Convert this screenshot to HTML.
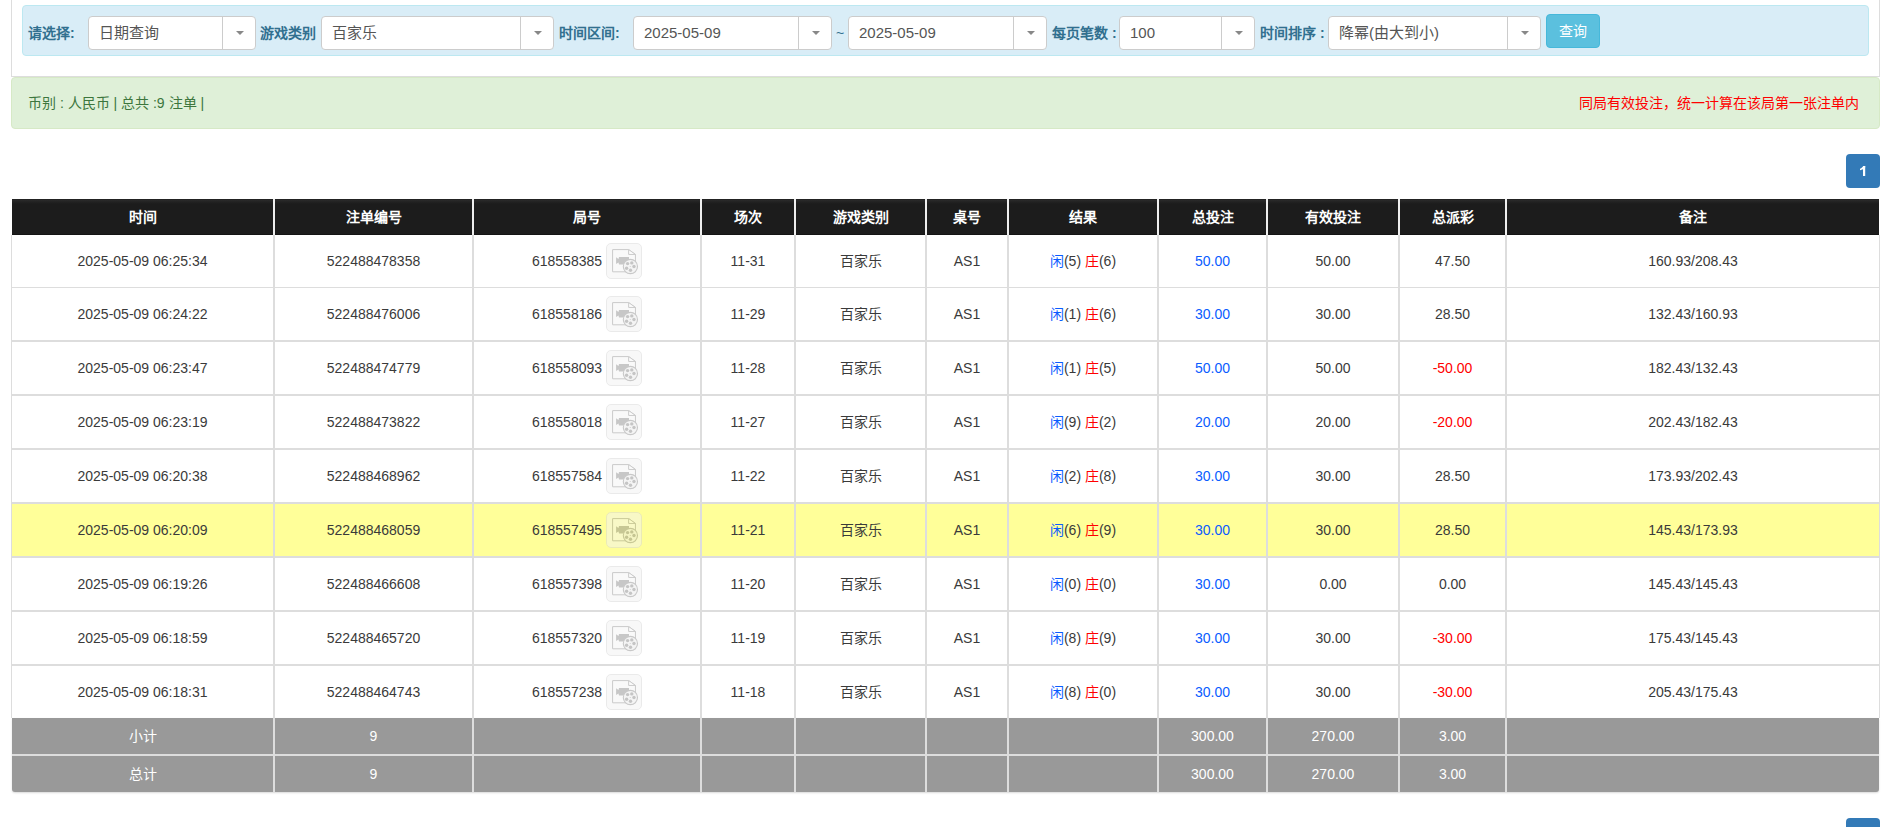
<!DOCTYPE html>
<html lang="zh-CN"><head><meta charset="utf-8"><style>
*{box-sizing:border-box;margin:0;padding:0}
html,body{width:1891px;height:827px;overflow:hidden;background:#fff;font-family:"Liberation Sans",sans-serif;color:#3a3a3a}
.abs{position:absolute}
.panel{position:absolute;left:11px;top:-20px;width:1869px;height:97px;border:1px solid #ddd;border-top:none;background:#fff}
.bar{position:absolute;left:22px;top:5px;width:1847px;height:51px;background:#d9edf7;border:1px solid #bce8f1;border-radius:4px}
.lab{position:absolute;top:25px;font-size:14px;line-height:16px;font-weight:bold;color:#31708f;white-space:nowrap}
.sel{position:absolute;top:16px;height:34px;background:#fff;border:1px solid #ccc;border-radius:4px;font-size:15px;color:#555;line-height:32px;padding-left:10px;white-space:nowrap}
.sel .dv{position:absolute;top:0;bottom:0;width:1px;background:#ccc}
.sel .ct{position:absolute;top:14px;width:0;height:0;border-left:4px solid transparent;border-right:4px solid transparent;border-top:4px solid #888}
.btn{position:absolute;left:1546px;top:14px;width:54px;height:34px;background:#5bc0de;border:1px solid #46b8da;border-radius:4px;color:#fff;font-size:14px;line-height:32px;text-align:center}
.alert{position:absolute;left:11px;top:77px;width:1869px;height:52px;background:#dff0d8;border:1px solid #d6e9c6;border-radius:4px;font-size:14px}
.pg{position:absolute;left:1846px;width:34px;height:34px;background:#337ab7;border-radius:4px;color:#fff;font-size:14px;line-height:34px;text-align:center}
.c{position:absolute;display:flex;align-items:center;justify-content:center;font-size:14px;white-space:nowrap}
.hd{color:#fff;font-weight:bold}
.vl{position:absolute;width:2px}
.hl{position:absolute;height:2px}
.cj{position:relative;top:-1px}
.b{color:#0a5cff}.r{color:#f00}
.ic{display:inline-block;width:36px;height:36px;border:1px solid #d7d7d7;border-radius:5px;background:#f3f3f3;margin-left:4px;position:relative;top:0px;opacity:.5}
.ic svg{position:absolute;left:-1px;top:-1px}
</style></head><body>

<div class="panel"></div>
<div class="bar"></div>
<div class="lab" style="left:28px">请选择:</div>
<div class="lab" style="left:260px">游戏类别</div>
<div class="lab" style="left:559px">时间区间:</div>
<div class="lab" style="left:836px;font-weight:normal">~</div>
<div class="lab" style="left:1052px">每页笔数 :</div>
<div class="lab" style="left:1260px">时间排序 :</div>
<div class="sel" style="left:88px;width:168px">日期查询<div class="dv" style="left:133px"></div><div class="ct" style="left:147px"></div></div>
<div class="sel" style="left:321px;width:233px">百家乐<div class="dv" style="left:198px"></div><div class="ct" style="left:212px"></div></div>
<div class="sel" style="left:633px;width:199px">2025-05-09<div class="dv" style="left:164px"></div><div class="ct" style="left:178px"></div></div>
<div class="sel" style="left:848px;width:199px">2025-05-09<div class="dv" style="left:164px"></div><div class="ct" style="left:178px"></div></div>
<div class="sel" style="left:1119px;width:136px">100<div class="dv" style="left:101px"></div><div class="ct" style="left:115px"></div></div>
<div class="sel" style="left:1328px;width:213px">降幂(由大到小)<div class="dv" style="left:178px"></div><div class="ct" style="left:192px"></div></div>
<div class="btn">查询</div>
<div class="alert"><div class="abs" style="left:16px;top:16px;color:#3c763d;line-height:18px">币别 : 人民币 | 总共 :9 注单 |</div><div class="abs" style="right:20px;top:16px;color:#f00;line-height:18px">同局有效投注，统一计算在该局第一张注单内</div></div>
<div class="pg" style="top:154px"><svg class="abs" style="left:0;top:0" width="34" height="34" viewBox="0 0 34 34"><path d="M17 12h2.2v10h-2.2z" fill="#fff"/><path d="M17.2 12L19.2 12L19.2 13.6C18 14.9 16.2 15.9 14 16.3L14 14.7C15.6 14.2 16.7 13.2 17.2 12z" fill="#fff"/></svg></div>
<div class="pg" style="top:818px"></div>
<div class="abs" style="left:12px;top:199px;width:1867px;height:36px;background:linear-gradient(#1a1a1a 0,#2b2b2b 1px,#222 3px,#1c1c1c 5px,#1c1c1c 35px,#0d0d0d 36px)"></div>
<div class="abs" style="left:12px;top:235px;width:1867px;height:52px;background:#fff"></div>
<div class="abs" style="left:12px;top:288px;width:1867px;height:52px;background:#fff"></div>
<div class="abs" style="left:12px;top:342px;width:1867px;height:52px;background:#fff"></div>
<div class="abs" style="left:12px;top:396px;width:1867px;height:52px;background:#fff"></div>
<div class="abs" style="left:12px;top:450px;width:1867px;height:52px;background:#fff"></div>
<div class="abs" style="left:12px;top:504px;width:1867px;height:52px;background:#ffff99"></div>
<div class="abs" style="left:12px;top:558px;width:1867px;height:52px;background:#fff"></div>
<div class="abs" style="left:12px;top:612px;width:1867px;height:52px;background:#fff"></div>
<div class="abs" style="left:12px;top:666px;width:1867px;height:52px;background:#fff"></div>
<div class="abs" style="left:12px;top:718px;width:1867px;height:74px;background:#999;border-radius:0 0 3px 3px;box-shadow:0 1px 2px rgba(0,0,0,.15)"></div>
<div class="abs" style="left:11px;top:235px;width:1px;height:483px;background:#ddd"></div>
<div class="abs" style="left:1879px;top:235px;width:1px;height:483px;background:#ddd"></div>
<div class="vl" style="left:273px;top:199px;height:36px;background:#eee"></div>
<div class="vl" style="left:273px;top:235px;height:483px;background:#ddd"></div>
<div class="vl" style="left:273px;top:718px;height:74px;background:#ddd"></div>
<div class="vl" style="left:472px;top:199px;height:36px;background:#eee"></div>
<div class="vl" style="left:472px;top:235px;height:483px;background:#ddd"></div>
<div class="vl" style="left:472px;top:718px;height:74px;background:#ddd"></div>
<div class="vl" style="left:700px;top:199px;height:36px;background:#eee"></div>
<div class="vl" style="left:700px;top:235px;height:483px;background:#ddd"></div>
<div class="vl" style="left:700px;top:718px;height:74px;background:#ddd"></div>
<div class="vl" style="left:794px;top:199px;height:36px;background:#eee"></div>
<div class="vl" style="left:794px;top:235px;height:483px;background:#ddd"></div>
<div class="vl" style="left:794px;top:718px;height:74px;background:#ddd"></div>
<div class="vl" style="left:925px;top:199px;height:36px;background:#eee"></div>
<div class="vl" style="left:925px;top:235px;height:483px;background:#ddd"></div>
<div class="vl" style="left:925px;top:718px;height:74px;background:#ddd"></div>
<div class="vl" style="left:1007px;top:199px;height:36px;background:#eee"></div>
<div class="vl" style="left:1007px;top:235px;height:483px;background:#ddd"></div>
<div class="vl" style="left:1007px;top:718px;height:74px;background:#ddd"></div>
<div class="vl" style="left:1157px;top:199px;height:36px;background:#eee"></div>
<div class="vl" style="left:1157px;top:235px;height:483px;background:#ddd"></div>
<div class="vl" style="left:1157px;top:718px;height:74px;background:#ddd"></div>
<div class="vl" style="left:1266px;top:199px;height:36px;background:#eee"></div>
<div class="vl" style="left:1266px;top:235px;height:483px;background:#ddd"></div>
<div class="vl" style="left:1266px;top:718px;height:74px;background:#ddd"></div>
<div class="vl" style="left:1398px;top:199px;height:36px;background:#eee"></div>
<div class="vl" style="left:1398px;top:235px;height:483px;background:#ddd"></div>
<div class="vl" style="left:1398px;top:718px;height:74px;background:#ddd"></div>
<div class="vl" style="left:1505px;top:199px;height:36px;background:#eee"></div>
<div class="vl" style="left:1505px;top:235px;height:483px;background:#ddd"></div>
<div class="vl" style="left:1505px;top:718px;height:74px;background:#ddd"></div>
<div class="hl" style="left:12px;top:287px;width:1867px;height:1px;background:#ddd"></div>
<div class="hl" style="left:12px;top:340px;width:1867px;height:2px;background:#ddd"></div>
<div class="hl" style="left:12px;top:394px;width:1867px;height:2px;background:#ddd"></div>
<div class="hl" style="left:12px;top:448px;width:1867px;height:2px;background:#ddd"></div>
<div class="hl" style="left:12px;top:502px;width:1867px;height:2px;background:#ddd"></div>
<div class="hl" style="left:12px;top:556px;width:1867px;height:2px;background:#ddd"></div>
<div class="hl" style="left:12px;top:610px;width:1867px;height:2px;background:#ddd"></div>
<div class="hl" style="left:12px;top:664px;width:1867px;height:2px;background:#ddd"></div>
<div class="hl" style="left:12px;top:754px;width:1867px;background:#ddd"></div>
<div class="c hd" style="left:12px;top:198px;width:261px;height:36px">时间</div>
<div class="c hd" style="left:275px;top:198px;width:197px;height:36px">注单编号</div>
<div class="c hd" style="left:474px;top:198px;width:226px;height:36px">局号</div>
<div class="c hd" style="left:702px;top:198px;width:92px;height:36px">场次</div>
<div class="c hd" style="left:796px;top:198px;width:129px;height:36px">游戏类别</div>
<div class="c hd" style="left:927px;top:198px;width:80px;height:36px">桌号</div>
<div class="c hd" style="left:1009px;top:198px;width:148px;height:36px">结果</div>
<div class="c hd" style="left:1159px;top:198px;width:107px;height:36px">总投注</div>
<div class="c hd" style="left:1268px;top:198px;width:130px;height:36px">有效投注</div>
<div class="c hd" style="left:1400px;top:198px;width:105px;height:36px">总派彩</div>
<div class="c hd" style="left:1507px;top:198px;width:372px;height:36px">备注</div>
<div class="c " style="left:12px;top:235px;width:261px;height:52px">2025-05-09 06:25:34</div>
<div class="c " style="left:275px;top:235px;width:197px;height:52px">522488478358</div>
<div class="c " style="left:474px;top:235px;width:226px;height:52px">618558385<span class="ic"><svg width="36" height="36" viewBox="-0.6 0 36 36"><path d="M6 6.6h16.05l6.8 4.85v17.35h-22.85z" fill="#f5f5f5" stroke="#979797" stroke-width="1"/><path d="M22.05 6.6v4.85h6.8z" fill="#fbfbfb" stroke="#979797" stroke-width="1"/><path d="M9.5 14.2L11.9 16L12.4 14H22.4V21.6H12.4L11.9 19.5L9.5 21z" fill="#919191"/><circle cx="23.8" cy="23.5" r="7.1" fill="#ebebeb" stroke="#939393" stroke-width="1.1"/><g fill="#8d8d8d"><circle cx="21" cy="20.6" r="1.7"/><circle cx="25.2" cy="19.9" r="1.7"/><circle cx="27.4" cy="23.5" r="1.7"/><circle cx="23.9" cy="27.2" r="1.7"/><circle cx="20" cy="25.3" r="1.7"/><circle cx="23.6" cy="23.4" r="0.5"/></g></svg></span></div>
<div class="c " style="left:702px;top:235px;width:92px;height:52px">11-31</div>
<div class="c " style="left:796px;top:235px;width:129px;height:52px"><span class="cj">百家乐</span></div>
<div class="c " style="left:927px;top:235px;width:80px;height:52px">AS1</div>
<div class="c " style="left:1009px;top:235px;width:148px;height:52px"><span class="b cj">闲</span>(5)&nbsp;<span class="r cj">庄</span>(6)</div>
<div class="c " style="left:1159px;top:235px;width:107px;height:52px"><span class="b">50.00</span></div>
<div class="c " style="left:1268px;top:235px;width:130px;height:52px">50.00</div>
<div class="c " style="left:1400px;top:235px;width:105px;height:52px">47.50</div>
<div class="c " style="left:1507px;top:235px;width:372px;height:52px">160.93/208.43</div>
<div class="c " style="left:12px;top:288px;width:261px;height:52px">2025-05-09 06:24:22</div>
<div class="c " style="left:275px;top:288px;width:197px;height:52px">522488476006</div>
<div class="c " style="left:474px;top:288px;width:226px;height:52px">618558186<span class="ic"><svg width="36" height="36" viewBox="-0.6 0 36 36"><path d="M6 6.6h16.05l6.8 4.85v17.35h-22.85z" fill="#f5f5f5" stroke="#979797" stroke-width="1"/><path d="M22.05 6.6v4.85h6.8z" fill="#fbfbfb" stroke="#979797" stroke-width="1"/><path d="M9.5 14.2L11.9 16L12.4 14H22.4V21.6H12.4L11.9 19.5L9.5 21z" fill="#919191"/><circle cx="23.8" cy="23.5" r="7.1" fill="#ebebeb" stroke="#939393" stroke-width="1.1"/><g fill="#8d8d8d"><circle cx="21" cy="20.6" r="1.7"/><circle cx="25.2" cy="19.9" r="1.7"/><circle cx="27.4" cy="23.5" r="1.7"/><circle cx="23.9" cy="27.2" r="1.7"/><circle cx="20" cy="25.3" r="1.7"/><circle cx="23.6" cy="23.4" r="0.5"/></g></svg></span></div>
<div class="c " style="left:702px;top:288px;width:92px;height:52px">11-29</div>
<div class="c " style="left:796px;top:288px;width:129px;height:52px"><span class="cj">百家乐</span></div>
<div class="c " style="left:927px;top:288px;width:80px;height:52px">AS1</div>
<div class="c " style="left:1009px;top:288px;width:148px;height:52px"><span class="b cj">闲</span>(1)&nbsp;<span class="r cj">庄</span>(6)</div>
<div class="c " style="left:1159px;top:288px;width:107px;height:52px"><span class="b">30.00</span></div>
<div class="c " style="left:1268px;top:288px;width:130px;height:52px">30.00</div>
<div class="c " style="left:1400px;top:288px;width:105px;height:52px">28.50</div>
<div class="c " style="left:1507px;top:288px;width:372px;height:52px">132.43/160.93</div>
<div class="c " style="left:12px;top:342px;width:261px;height:52px">2025-05-09 06:23:47</div>
<div class="c " style="left:275px;top:342px;width:197px;height:52px">522488474779</div>
<div class="c " style="left:474px;top:342px;width:226px;height:52px">618558093<span class="ic"><svg width="36" height="36" viewBox="-0.6 0 36 36"><path d="M6 6.6h16.05l6.8 4.85v17.35h-22.85z" fill="#f5f5f5" stroke="#979797" stroke-width="1"/><path d="M22.05 6.6v4.85h6.8z" fill="#fbfbfb" stroke="#979797" stroke-width="1"/><path d="M9.5 14.2L11.9 16L12.4 14H22.4V21.6H12.4L11.9 19.5L9.5 21z" fill="#919191"/><circle cx="23.8" cy="23.5" r="7.1" fill="#ebebeb" stroke="#939393" stroke-width="1.1"/><g fill="#8d8d8d"><circle cx="21" cy="20.6" r="1.7"/><circle cx="25.2" cy="19.9" r="1.7"/><circle cx="27.4" cy="23.5" r="1.7"/><circle cx="23.9" cy="27.2" r="1.7"/><circle cx="20" cy="25.3" r="1.7"/><circle cx="23.6" cy="23.4" r="0.5"/></g></svg></span></div>
<div class="c " style="left:702px;top:342px;width:92px;height:52px">11-28</div>
<div class="c " style="left:796px;top:342px;width:129px;height:52px"><span class="cj">百家乐</span></div>
<div class="c " style="left:927px;top:342px;width:80px;height:52px">AS1</div>
<div class="c " style="left:1009px;top:342px;width:148px;height:52px"><span class="b cj">闲</span>(1)&nbsp;<span class="r cj">庄</span>(5)</div>
<div class="c " style="left:1159px;top:342px;width:107px;height:52px"><span class="b">50.00</span></div>
<div class="c " style="left:1268px;top:342px;width:130px;height:52px">50.00</div>
<div class="c " style="left:1400px;top:342px;width:105px;height:52px"><span class="r">-50.00</span></div>
<div class="c " style="left:1507px;top:342px;width:372px;height:52px">182.43/132.43</div>
<div class="c " style="left:12px;top:396px;width:261px;height:52px">2025-05-09 06:23:19</div>
<div class="c " style="left:275px;top:396px;width:197px;height:52px">522488473822</div>
<div class="c " style="left:474px;top:396px;width:226px;height:52px">618558018<span class="ic"><svg width="36" height="36" viewBox="-0.6 0 36 36"><path d="M6 6.6h16.05l6.8 4.85v17.35h-22.85z" fill="#f5f5f5" stroke="#979797" stroke-width="1"/><path d="M22.05 6.6v4.85h6.8z" fill="#fbfbfb" stroke="#979797" stroke-width="1"/><path d="M9.5 14.2L11.9 16L12.4 14H22.4V21.6H12.4L11.9 19.5L9.5 21z" fill="#919191"/><circle cx="23.8" cy="23.5" r="7.1" fill="#ebebeb" stroke="#939393" stroke-width="1.1"/><g fill="#8d8d8d"><circle cx="21" cy="20.6" r="1.7"/><circle cx="25.2" cy="19.9" r="1.7"/><circle cx="27.4" cy="23.5" r="1.7"/><circle cx="23.9" cy="27.2" r="1.7"/><circle cx="20" cy="25.3" r="1.7"/><circle cx="23.6" cy="23.4" r="0.5"/></g></svg></span></div>
<div class="c " style="left:702px;top:396px;width:92px;height:52px">11-27</div>
<div class="c " style="left:796px;top:396px;width:129px;height:52px"><span class="cj">百家乐</span></div>
<div class="c " style="left:927px;top:396px;width:80px;height:52px">AS1</div>
<div class="c " style="left:1009px;top:396px;width:148px;height:52px"><span class="b cj">闲</span>(9)&nbsp;<span class="r cj">庄</span>(2)</div>
<div class="c " style="left:1159px;top:396px;width:107px;height:52px"><span class="b">20.00</span></div>
<div class="c " style="left:1268px;top:396px;width:130px;height:52px">20.00</div>
<div class="c " style="left:1400px;top:396px;width:105px;height:52px"><span class="r">-20.00</span></div>
<div class="c " style="left:1507px;top:396px;width:372px;height:52px">202.43/182.43</div>
<div class="c " style="left:12px;top:450px;width:261px;height:52px">2025-05-09 06:20:38</div>
<div class="c " style="left:275px;top:450px;width:197px;height:52px">522488468962</div>
<div class="c " style="left:474px;top:450px;width:226px;height:52px">618557584<span class="ic"><svg width="36" height="36" viewBox="-0.6 0 36 36"><path d="M6 6.6h16.05l6.8 4.85v17.35h-22.85z" fill="#f5f5f5" stroke="#979797" stroke-width="1"/><path d="M22.05 6.6v4.85h6.8z" fill="#fbfbfb" stroke="#979797" stroke-width="1"/><path d="M9.5 14.2L11.9 16L12.4 14H22.4V21.6H12.4L11.9 19.5L9.5 21z" fill="#919191"/><circle cx="23.8" cy="23.5" r="7.1" fill="#ebebeb" stroke="#939393" stroke-width="1.1"/><g fill="#8d8d8d"><circle cx="21" cy="20.6" r="1.7"/><circle cx="25.2" cy="19.9" r="1.7"/><circle cx="27.4" cy="23.5" r="1.7"/><circle cx="23.9" cy="27.2" r="1.7"/><circle cx="20" cy="25.3" r="1.7"/><circle cx="23.6" cy="23.4" r="0.5"/></g></svg></span></div>
<div class="c " style="left:702px;top:450px;width:92px;height:52px">11-22</div>
<div class="c " style="left:796px;top:450px;width:129px;height:52px"><span class="cj">百家乐</span></div>
<div class="c " style="left:927px;top:450px;width:80px;height:52px">AS1</div>
<div class="c " style="left:1009px;top:450px;width:148px;height:52px"><span class="b cj">闲</span>(2)&nbsp;<span class="r cj">庄</span>(8)</div>
<div class="c " style="left:1159px;top:450px;width:107px;height:52px"><span class="b">30.00</span></div>
<div class="c " style="left:1268px;top:450px;width:130px;height:52px">30.00</div>
<div class="c " style="left:1400px;top:450px;width:105px;height:52px">28.50</div>
<div class="c " style="left:1507px;top:450px;width:372px;height:52px">173.93/202.43</div>
<div class="c " style="left:12px;top:504px;width:261px;height:52px">2025-05-09 06:20:09</div>
<div class="c " style="left:275px;top:504px;width:197px;height:52px">522488468059</div>
<div class="c " style="left:474px;top:504px;width:226px;height:52px">618557495<span class="ic"><svg width="36" height="36" viewBox="-0.6 0 36 36"><path d="M6 6.6h16.05l6.8 4.85v17.35h-22.85z" fill="#f5f5f5" stroke="#979797" stroke-width="1"/><path d="M22.05 6.6v4.85h6.8z" fill="#fbfbfb" stroke="#979797" stroke-width="1"/><path d="M9.5 14.2L11.9 16L12.4 14H22.4V21.6H12.4L11.9 19.5L9.5 21z" fill="#919191"/><circle cx="23.8" cy="23.5" r="7.1" fill="#ebebeb" stroke="#939393" stroke-width="1.1"/><g fill="#8d8d8d"><circle cx="21" cy="20.6" r="1.7"/><circle cx="25.2" cy="19.9" r="1.7"/><circle cx="27.4" cy="23.5" r="1.7"/><circle cx="23.9" cy="27.2" r="1.7"/><circle cx="20" cy="25.3" r="1.7"/><circle cx="23.6" cy="23.4" r="0.5"/></g></svg></span></div>
<div class="c " style="left:702px;top:504px;width:92px;height:52px">11-21</div>
<div class="c " style="left:796px;top:504px;width:129px;height:52px"><span class="cj">百家乐</span></div>
<div class="c " style="left:927px;top:504px;width:80px;height:52px">AS1</div>
<div class="c " style="left:1009px;top:504px;width:148px;height:52px"><span class="b cj">闲</span>(6)&nbsp;<span class="r cj">庄</span>(9)</div>
<div class="c " style="left:1159px;top:504px;width:107px;height:52px"><span class="b">30.00</span></div>
<div class="c " style="left:1268px;top:504px;width:130px;height:52px">30.00</div>
<div class="c " style="left:1400px;top:504px;width:105px;height:52px">28.50</div>
<div class="c " style="left:1507px;top:504px;width:372px;height:52px">145.43/173.93</div>
<div class="c " style="left:12px;top:558px;width:261px;height:52px">2025-05-09 06:19:26</div>
<div class="c " style="left:275px;top:558px;width:197px;height:52px">522488466608</div>
<div class="c " style="left:474px;top:558px;width:226px;height:52px">618557398<span class="ic"><svg width="36" height="36" viewBox="-0.6 0 36 36"><path d="M6 6.6h16.05l6.8 4.85v17.35h-22.85z" fill="#f5f5f5" stroke="#979797" stroke-width="1"/><path d="M22.05 6.6v4.85h6.8z" fill="#fbfbfb" stroke="#979797" stroke-width="1"/><path d="M9.5 14.2L11.9 16L12.4 14H22.4V21.6H12.4L11.9 19.5L9.5 21z" fill="#919191"/><circle cx="23.8" cy="23.5" r="7.1" fill="#ebebeb" stroke="#939393" stroke-width="1.1"/><g fill="#8d8d8d"><circle cx="21" cy="20.6" r="1.7"/><circle cx="25.2" cy="19.9" r="1.7"/><circle cx="27.4" cy="23.5" r="1.7"/><circle cx="23.9" cy="27.2" r="1.7"/><circle cx="20" cy="25.3" r="1.7"/><circle cx="23.6" cy="23.4" r="0.5"/></g></svg></span></div>
<div class="c " style="left:702px;top:558px;width:92px;height:52px">11-20</div>
<div class="c " style="left:796px;top:558px;width:129px;height:52px"><span class="cj">百家乐</span></div>
<div class="c " style="left:927px;top:558px;width:80px;height:52px">AS1</div>
<div class="c " style="left:1009px;top:558px;width:148px;height:52px"><span class="b cj">闲</span>(0)&nbsp;<span class="r cj">庄</span>(0)</div>
<div class="c " style="left:1159px;top:558px;width:107px;height:52px"><span class="b">30.00</span></div>
<div class="c " style="left:1268px;top:558px;width:130px;height:52px">0.00</div>
<div class="c " style="left:1400px;top:558px;width:105px;height:52px">0.00</div>
<div class="c " style="left:1507px;top:558px;width:372px;height:52px">145.43/145.43</div>
<div class="c " style="left:12px;top:612px;width:261px;height:52px">2025-05-09 06:18:59</div>
<div class="c " style="left:275px;top:612px;width:197px;height:52px">522488465720</div>
<div class="c " style="left:474px;top:612px;width:226px;height:52px">618557320<span class="ic"><svg width="36" height="36" viewBox="-0.6 0 36 36"><path d="M6 6.6h16.05l6.8 4.85v17.35h-22.85z" fill="#f5f5f5" stroke="#979797" stroke-width="1"/><path d="M22.05 6.6v4.85h6.8z" fill="#fbfbfb" stroke="#979797" stroke-width="1"/><path d="M9.5 14.2L11.9 16L12.4 14H22.4V21.6H12.4L11.9 19.5L9.5 21z" fill="#919191"/><circle cx="23.8" cy="23.5" r="7.1" fill="#ebebeb" stroke="#939393" stroke-width="1.1"/><g fill="#8d8d8d"><circle cx="21" cy="20.6" r="1.7"/><circle cx="25.2" cy="19.9" r="1.7"/><circle cx="27.4" cy="23.5" r="1.7"/><circle cx="23.9" cy="27.2" r="1.7"/><circle cx="20" cy="25.3" r="1.7"/><circle cx="23.6" cy="23.4" r="0.5"/></g></svg></span></div>
<div class="c " style="left:702px;top:612px;width:92px;height:52px">11-19</div>
<div class="c " style="left:796px;top:612px;width:129px;height:52px"><span class="cj">百家乐</span></div>
<div class="c " style="left:927px;top:612px;width:80px;height:52px">AS1</div>
<div class="c " style="left:1009px;top:612px;width:148px;height:52px"><span class="b cj">闲</span>(8)&nbsp;<span class="r cj">庄</span>(9)</div>
<div class="c " style="left:1159px;top:612px;width:107px;height:52px"><span class="b">30.00</span></div>
<div class="c " style="left:1268px;top:612px;width:130px;height:52px">30.00</div>
<div class="c " style="left:1400px;top:612px;width:105px;height:52px"><span class="r">-30.00</span></div>
<div class="c " style="left:1507px;top:612px;width:372px;height:52px">175.43/145.43</div>
<div class="c " style="left:12px;top:666px;width:261px;height:52px">2025-05-09 06:18:31</div>
<div class="c " style="left:275px;top:666px;width:197px;height:52px">522488464743</div>
<div class="c " style="left:474px;top:666px;width:226px;height:52px">618557238<span class="ic"><svg width="36" height="36" viewBox="-0.6 0 36 36"><path d="M6 6.6h16.05l6.8 4.85v17.35h-22.85z" fill="#f5f5f5" stroke="#979797" stroke-width="1"/><path d="M22.05 6.6v4.85h6.8z" fill="#fbfbfb" stroke="#979797" stroke-width="1"/><path d="M9.5 14.2L11.9 16L12.4 14H22.4V21.6H12.4L11.9 19.5L9.5 21z" fill="#919191"/><circle cx="23.8" cy="23.5" r="7.1" fill="#ebebeb" stroke="#939393" stroke-width="1.1"/><g fill="#8d8d8d"><circle cx="21" cy="20.6" r="1.7"/><circle cx="25.2" cy="19.9" r="1.7"/><circle cx="27.4" cy="23.5" r="1.7"/><circle cx="23.9" cy="27.2" r="1.7"/><circle cx="20" cy="25.3" r="1.7"/><circle cx="23.6" cy="23.4" r="0.5"/></g></svg></span></div>
<div class="c " style="left:702px;top:666px;width:92px;height:52px">11-18</div>
<div class="c " style="left:796px;top:666px;width:129px;height:52px"><span class="cj">百家乐</span></div>
<div class="c " style="left:927px;top:666px;width:80px;height:52px">AS1</div>
<div class="c " style="left:1009px;top:666px;width:148px;height:52px"><span class="b cj">闲</span>(8)&nbsp;<span class="r cj">庄</span>(0)</div>
<div class="c " style="left:1159px;top:666px;width:107px;height:52px"><span class="b">30.00</span></div>
<div class="c " style="left:1268px;top:666px;width:130px;height:52px">30.00</div>
<div class="c " style="left:1400px;top:666px;width:105px;height:52px"><span class="r">-30.00</span></div>
<div class="c " style="left:1507px;top:666px;width:372px;height:52px">205.43/175.43</div>
<div class="c " style="left:12px;top:718px;width:261px;height:36px"><span class="cj" style="color:#fff">小计</span></div>
<div class="c " style="left:275px;top:718px;width:197px;height:36px"><span style="color:#fff">9</span></div>
<div class="c " style="left:1159px;top:718px;width:107px;height:36px"><span style="color:#fff">300.00</span></div>
<div class="c " style="left:1268px;top:718px;width:130px;height:36px"><span style="color:#fff">270.00</span></div>
<div class="c " style="left:1400px;top:718px;width:105px;height:36px"><span style="color:#fff">3.00</span></div>
<div class="c " style="left:12px;top:756px;width:261px;height:36px"><span class="cj" style="color:#fff">总计</span></div>
<div class="c " style="left:275px;top:756px;width:197px;height:36px"><span style="color:#fff">9</span></div>
<div class="c " style="left:1159px;top:756px;width:107px;height:36px"><span style="color:#fff">300.00</span></div>
<div class="c " style="left:1268px;top:756px;width:130px;height:36px"><span style="color:#fff">270.00</span></div>
<div class="c " style="left:1400px;top:756px;width:105px;height:36px"><span style="color:#fff">3.00</span></div>
</body></html>
